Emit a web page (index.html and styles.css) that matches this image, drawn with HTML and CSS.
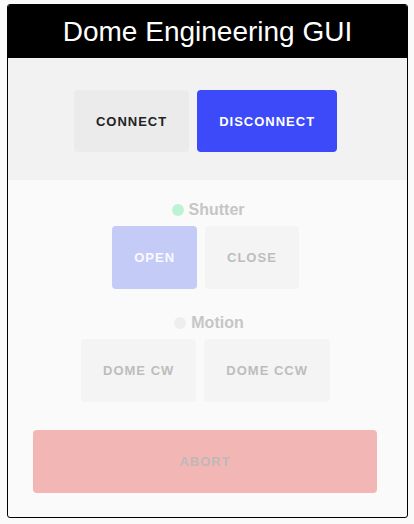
FILE: index.html
```html
<!DOCTYPE html>
<html>
<head>
<meta charset="utf-8">
<link rel="stylesheet" href="styles.css">
</head>
<body>
<div class="card">
  <div class="header">Dome Engineering GUI</div>
  <div class="conn">
    <div class="row">
      <button class="btn btn-connect">CONNECT</button>
      <button class="btn btn-primary">DISCONNECT</button>
    </div>
  </div>
  <div class="lower">
    <div class="label label-shutter"><span class="dot dot-green"></span>Shutter</div>
    <div class="row">
      <button class="btn btn-open">OPEN</button>
      <button class="btn btn-off">CLOSE</button>
    </div>
    <div class="label label-motion"><span class="dot dot-gray"></span>Motion</div>
    <div class="row">
      <button class="btn btn-off">DOME CW</button>
      <button class="btn btn-off">DOME CCW</button>
    </div>
    <button class="btn btn-abort">ABORT</button>
  </div>
</div>
</body>
</html>
```

FILE: styles.css
```css
html, body {
  margin: 0;
  padding: 0;
  background: #fafafa;
}
body {
  padding: 4px 6px 6px 7px;
  font-family: "Liberation Sans", Arial, sans-serif;
}
.card {
  width: 399px;
  border: 1px solid #000;
  border-radius: 3px;
  background: #fafafa;
  overflow: hidden;
}
.header {
  height: 53px;
  background: #000;
  color: #fff;
  font-size: 28px;
  line-height: 32px;
  display: flex;
  align-items: center;
  justify-content: center;
  padding-top: 1px;
  box-sizing: border-box;
}
.conn {
  background: #f2f2f2;
  padding: 32px 4px 28px 0;
}
.row {
  display: flex;
  justify-content: center;
  gap: 8px;
}
.btn {
  font-family: "Liberation Sans", Arial, sans-serif;
  font-weight: bold;
  font-size: 13px;
  letter-spacing: 1px;
  border: none;
  border-radius: 4px;
  padding: 0 22px;
  height: 63px;
  margin: 0;
  cursor: pointer;
}
.conn .btn {
  height: 62px;
}
.btn-connect {
  background: #ebebeb;
  color: #222;
}
.btn-primary {
  background: #3c4af9;
  color: #fff;
}
.btn-open {
  background: #c5cbf7;
  color: #fafaff;
}
.btn-off {
  background: #f4f4f4;
  color: #bdbdbd;
}
.btn-abort {
  display: block;
  width: 344px;
  margin: 28px 0 0 25px;
  background: #f2b7b5;
  color: #c0b8b8;
}
.lower {
  padding: 20px 4px 24px 0;
}
.label {
  display: flex;
  justify-content: center;
  align-items: center;
  gap: 5px;
  height: 17px;
  padding-top: 1px;
  margin-bottom: 8px;
  font-size: 16px;
  font-weight: bold;
  color: #c6c6c6;
}
.label-shutter {
  padding-left: 5px;
}
.label-motion {
  margin-top: 24px;
  padding-left: 7px;
}
.dot {
  width: 12px;
  height: 12px;
  border-radius: 50%;
  display: inline-block;
}
.dot-green {
  background: #bdf3d5;
}
.dot-gray {
  background: #eeeeee;
}
```
